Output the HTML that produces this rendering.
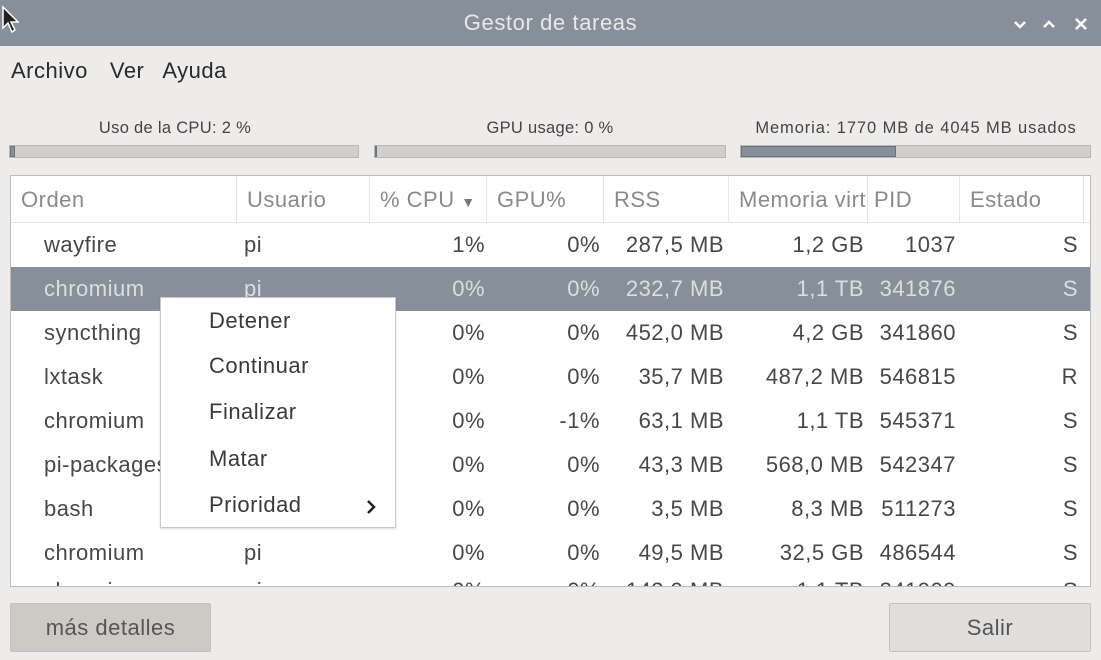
<!DOCTYPE html>
<html><head><meta charset="utf-8"><style>
*{margin:0;padding:0;box-sizing:border-box}
body{width:1101px;height:660px;overflow:hidden;background:#edecea;font-family:"Liberation Sans",sans-serif;color:#333;position:relative}
.a{position:absolute;white-space:nowrap}
#title{left:0;top:0;width:1101px;height:46px;background:#87909a;color:#e6e9ec;font-size:22px;letter-spacing:.6px;text-align:center;line-height:46px}
.lbl{font-size:16.5px;color:#444;top:119px;letter-spacing:.3px}
.bar{top:145px;height:13px;background:#d0cfcd;border:1px solid #b8b7b5}
.fill{position:absolute;left:0;top:0;bottom:0;background:#87909a;border:1px solid #6a727b}
#tbl{left:10px;top:175px;width:1081px;height:412px;background:#fff;border:1px solid #bdbcba;overflow:hidden}
.h{top:0;height:47px;line-height:47px;font-size:22px;letter-spacing:.5px;color:#8a8a8a;border-right:1px solid #e4e4e4;padding-left:10px;overflow:hidden}
.row{position:absolute;left:0;width:1081px;height:44px;font-size:22px;letter-spacing:.5px;color:#474747;line-height:44px}
.row.sel{background:#87909a;color:#d9dee3}
.row span{position:absolute;top:0}
.r{text-align:right}
#menu{left:160px;top:297px;width:236px;height:231px;background:#fff;border:1px solid #c8c8c8;box-shadow:0 1px 2px rgba(0,0,0,.15)}
#menu div{position:absolute;left:48px;font-size:22px;letter-spacing:.5px;color:#3a3a3a}
.btn{top:603px;height:49px;border:1px solid #c4c2bf;border-radius:2px;font-size:22px;letter-spacing:.5px;text-align:center;line-height:47px;color:#555}
</style></head><body>
<div id="title" class="a">Gestor de tareas</div>
<svg class="a" style="left:0;top:4px" width="20" height="30" viewBox="0 0 20 30"><path d="M3 3 L3 24 L8 19 L12 28 L15 26 L11 18 L18 18 Z" fill="#222" stroke="#fff" stroke-width="1.5"/></svg>
<svg class="a" style="left:1010px;top:14px" width="80" height="20" viewBox="0 0 80 20"><path d="M5 8 L10 13 L15 8" stroke="#fff" stroke-width="2.5" fill="none"/><path d="M34 13 L39 8 L44 13" stroke="#fff" stroke-width="2.5" fill="none"/><path d="M66 5 L76 15 M76 5 L66 15" stroke="#fff" stroke-width="2.5"/></svg>
<div class="a" style="left:11px;top:58px;font-size:22px;letter-spacing:.5px;color:#2a2a2a">Archivo<span style="margin-left:22px">Ver</span><span style="margin-left:18px">Ayuda</span></div>
<div class="a lbl" style="left:0;width:350px;text-align:center">Uso de la CPU: 2 %</div>
<div class="a lbl" style="left:375px;width:350px;text-align:center">GPU usage: 0 %</div>
<div class="a lbl" style="left:741px;width:350px;text-align:center;letter-spacing:.9px">Memoria: 1770 MB de 4045 MB usados</div>
<div class="a bar" style="left:9px;width:350px"><div class="fill" style="width:5px"></div></div>
<div class="a bar" style="left:374px;width:352px"><div class="fill" style="width:2px"></div></div>
<div class="a bar" style="left:740px;width:351px"><div class="fill" style="width:155px"></div></div>
<div id="tbl" class="a">
<div class="a h" style="left:0;width:226px">Orden</div>
<div class="a h" style="left:226px;width:133px">Usuario</div>
<div class="a h" style="left:359px;width:117px">% CPU <span style="font-size:14px;color:#777">&#9660;</span></div>
<div class="a h" style="left:476px;width:117px">GPU%</div>
<div class="a h" style="left:593px;width:125px">RSS</div>
<div class="a h" style="left:718px;width:139px">Memoria virtual</div>
<div class="a h" style="left:857px;width:92px;padding-left:6px">PID</div>
<div class="a h" style="left:949px;width:124px">Estado</div>
<div class="a" style="left:0;top:46px;width:1081px;height:1px;background:#e4e4e4"></div>
<div class="row" style="top:47px"><span style="left:33px">wayfire</span><span style="left:233px">pi</span><span class="r" style="right:607px">1%</span><span class="r" style="right:492px">0%</span><span class="r" style="right:368px">287,5 MB</span><span class="r" style="right:228px">1,2 GB</span><span class="r" style="right:136px">1037</span><span class="r" style="right:14px">S</span></div>
<div class="row sel" style="top:91px"><span style="left:33px">chromium</span><span style="left:233px">pi</span><span class="r" style="right:607px">0%</span><span class="r" style="right:492px">0%</span><span class="r" style="right:368px">232,7 MB</span><span class="r" style="right:228px">1,1 TB</span><span class="r" style="right:136px">341876</span><span class="r" style="right:14px">S</span></div>
<div class="row" style="top:135px"><span style="left:33px">syncthing</span><span style="left:233px">pi</span><span class="r" style="right:607px">0%</span><span class="r" style="right:492px">0%</span><span class="r" style="right:368px">452,0 MB</span><span class="r" style="right:228px">4,2 GB</span><span class="r" style="right:136px">341860</span><span class="r" style="right:14px">S</span></div>
<div class="row" style="top:179px"><span style="left:33px">lxtask</span><span style="left:233px">pi</span><span class="r" style="right:607px">0%</span><span class="r" style="right:492px">0%</span><span class="r" style="right:368px">35,7 MB</span><span class="r" style="right:228px">487,2 MB</span><span class="r" style="right:136px">546815</span><span class="r" style="right:14px">R</span></div>
<div class="row" style="top:223px"><span style="left:33px">chromium</span><span style="left:233px">pi</span><span class="r" style="right:607px">0%</span><span class="r" style="right:492px">-1%</span><span class="r" style="right:368px">63,1 MB</span><span class="r" style="right:228px">1,1 TB</span><span class="r" style="right:136px">545371</span><span class="r" style="right:14px">S</span></div>
<div class="row" style="top:267px"><span style="left:33px">pi-packages</span><span style="left:233px">pi</span><span class="r" style="right:607px">0%</span><span class="r" style="right:492px">0%</span><span class="r" style="right:368px">43,3 MB</span><span class="r" style="right:228px">568,0 MB</span><span class="r" style="right:136px">542347</span><span class="r" style="right:14px">S</span></div>
<div class="row" style="top:311px"><span style="left:33px">bash</span><span style="left:233px">pi</span><span class="r" style="right:607px">0%</span><span class="r" style="right:492px">0%</span><span class="r" style="right:368px">3,5 MB</span><span class="r" style="right:228px">8,3 MB</span><span class="r" style="right:136px">511273</span><span class="r" style="right:14px">S</span></div>
<div class="row" style="top:355px"><span style="left:33px">chromium</span><span style="left:233px">pi</span><span class="r" style="right:607px">0%</span><span class="r" style="right:492px">0%</span><span class="r" style="right:368px">49,5 MB</span><span class="r" style="right:228px">32,5 GB</span><span class="r" style="right:136px">486544</span><span class="r" style="right:14px">S</span></div>
<div class="row" style="top:393px"><span style="left:33px">chromium</span><span style="left:233px">pi</span><span class="r" style="right:607px">0%</span><span class="r" style="right:492px">0%</span><span class="r" style="right:368px">143,9 MB</span><span class="r" style="right:228px">1,1 TB</span><span class="r" style="right:136px">341909</span><span class="r" style="right:14px">S</span></div>
</div>
<div id="menu" class="a">
<div style="top:10px">Detener</div>
<div style="top:55px">Continuar</div>
<div style="top:101px">Finalizar</div>
<div style="top:148px">Matar</div>
<div style="top:194px">Prioridad</div>
<svg style="position:absolute;left:204px;top:201px" width="12" height="16" viewBox="0 0 12 16"><path d="M3 2 L9 8 L3 14" stroke="#222" stroke-width="2.5" fill="none"/></svg>
</div>
<div class="a btn" style="left:10px;width:201px;background:#cdcac6">más detalles</div>
<div class="a btn" style="left:889px;width:202px;background:#e0dfdd">Salir</div>
</body></html>
